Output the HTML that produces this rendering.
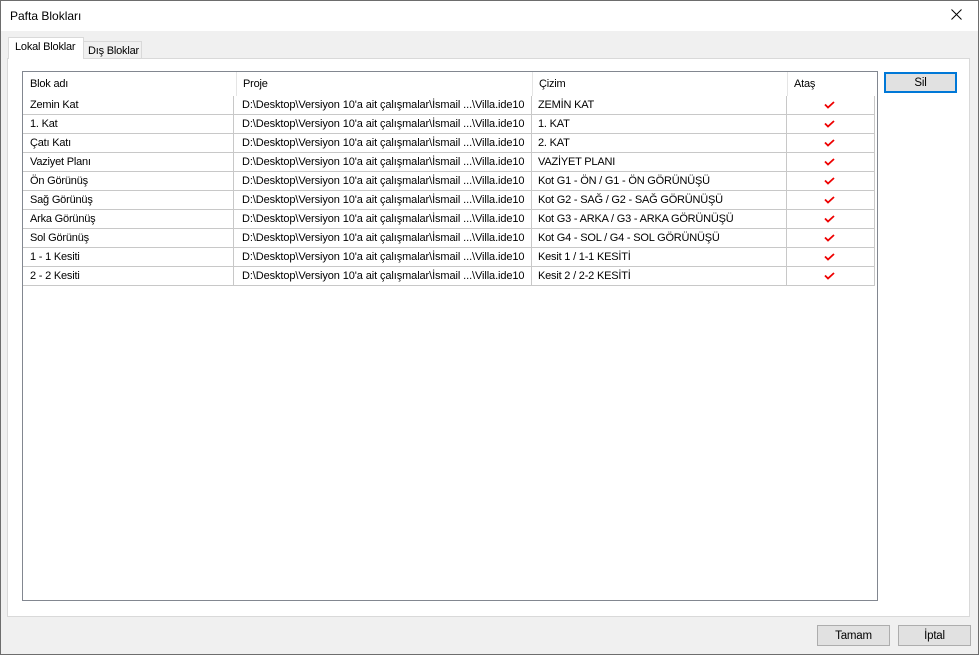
<!DOCTYPE html>
<html><head><meta charset="utf-8"><style>
*{box-sizing:border-box;margin:0;padding:0}
body{width:979px;height:655px;overflow:hidden;background:#f0f0f0;font-family:"Liberation Sans",sans-serif;font-size:11px;letter-spacing:-0.2px;color:#000;position:relative}
.win{position:absolute;left:0;top:0;width:979px;height:655px;border:1px solid #6d6d6d;z-index:5;pointer-events:none}
.title{position:absolute;left:0;top:0;width:979px;height:31px;background:#fff}
.title span{position:absolute;left:10px;top:9px;font-size:12px;letter-spacing:0}
.x{position:absolute;left:951px;top:9px;width:11px;height:11px}
.tab{position:absolute;background:#f0f0f0;border:1px solid #d9d9d9;border-bottom:none;padding:3px 6px;white-space:nowrap}
.page{position:absolute;left:7px;top:58px;width:963px;height:559px;background:#fff;border:1px solid #d9d9d9}
.list{position:absolute;left:22px;top:71px;width:856px;height:530px;border:1px solid #828790;background:#fff}
.hdr{position:absolute;top:0;height:24px;line-height:25px;padding-left:7px;border-right:1px solid #e5e5e5}
.row{position:absolute;left:0;width:852px;height:19px;border-bottom:1px solid #c8c8c8}
.c{position:absolute;top:0;height:18px;line-height:19px;padding-left:7px;border-right:1px solid #c8c8c8;white-space:nowrap;overflow:hidden}
.btn{position:absolute;height:21px;background:#e1e1e1;border:1px solid #adadad;text-align:center;line-height:20px;font-size:11.5px}
</style></head><body>
<div class="title"><span>Pafta Blokları</span>
<svg class="x" viewBox="0 0 11 11"><path d="M0.5 0.5L10.5 10.5M10.5 0.5L0.5 10.5" stroke="#000" stroke-width="1"/></svg></div>
<div class="page"></div>
<div class="tab" style="left:8px;top:37px;width:76px;height:22px;background:#fff;z-index:2">Lokal Bloklar</div>
<div class="tab" style="left:83px;top:41px;width:59px;height:17px;padding:3px 4px 0">Dış Bloklar</div>
<div class="list">
<div class="hdr" style="left:0;width:214px">Blok adı</div>
<div class="hdr" style="left:213px;width:297px">Proje</div>
<div class="hdr" style="left:509px;width:256px">Çizim</div>
<div class="hdr" style="left:764px;width:88px;border-right:none">Ataş</div>
<div id="rows"></div>
</div>
<div class="btn" style="left:884px;top:72px;width:73px;border:2px solid #0078d7;line-height:18px">Sil</div>
<div class="btn" style="left:817px;top:625px;width:73px">Tamam</div>
<div class="btn" style="left:898px;top:625px;width:73px">İptal</div>
<div class="win"></div>
<script>
var d=[["Zemin Kat","ZEMİN KAT"],["1. Kat","1. KAT"],["Çatı Katı","2. KAT"],["Vaziyet Planı","VAZİYET PLANI"],["Ön Görünüş","Kot G1 - ÖN / G1 - ÖN GÖRÜNÜŞÜ"],["Sağ Görünüş","Kot G2 - SAĞ / G2 - SAĞ GÖRÜNÜŞÜ"],["Arka Görünüş","Kot G3 - ARKA / G3 - ARKA GÖRÜNÜŞÜ"],["Sol Görünüş","Kot G4 - SOL / G4 - SOL GÖRÜNÜŞÜ"],["1 - 1 Kesiti","Kesit 1 / 1-1 KESİTİ"],["2 - 2 Kesiti","Kesit 2 / 2-2 KESİTİ"]];
var h="";d.forEach(function(r,i){h+='<div class="row" style="top:'+(24+i*19)+'px"><div class="c" style="left:0;width:211px">'+r[0]+'</div><div class="c" style="left:210px;width:299px;padding-left:9px;letter-spacing:-0.1px">D:\\Desktop\\Versiyon 10\'a ait çalışmalar\\İsmail ...\\Villa.ide10</div><div class="c" style="left:508px;width:256px">'+r[1]+'</div><div class="c" style="left:763px;width:89px"><svg style="position:absolute;left:38px;top:5px" width="11" height="8" viewBox="0 0 11 8"><path d="M1 3.5L4 6.5L10 1" stroke="#e00" stroke-width="1.8" fill="none"/></svg></div></div>'});
document.getElementById("rows").innerHTML=h;
</script>
</body></html>
